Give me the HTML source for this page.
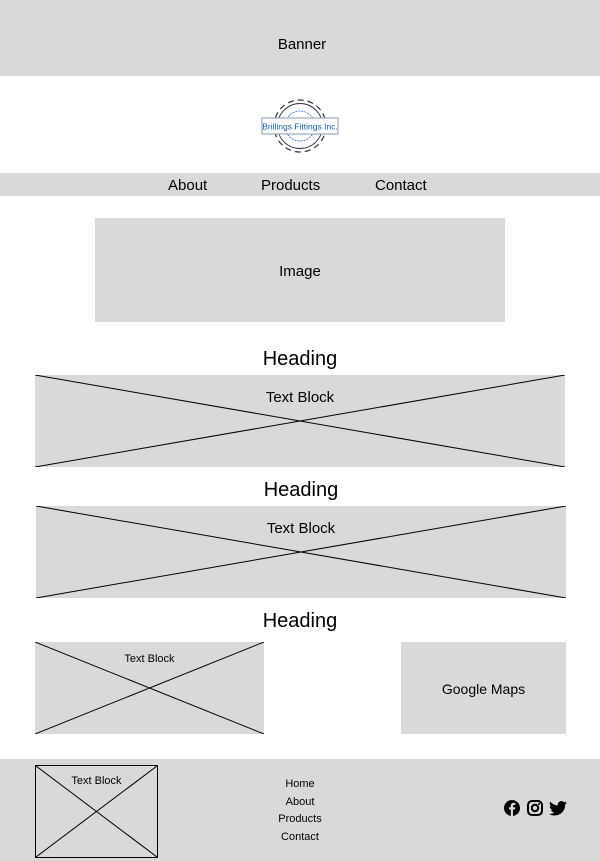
<html><head><style>
body{margin:0;width:600px;height:861px;position:relative;background:#fff;font-family:"Liberation Sans",sans-serif;color:#000;overflow:hidden}
.a{position:absolute}
.g{background:#d9d9d9}
.c{display:flex;align-items:center;justify-content:center}
.t{position:absolute;width:100%;text-align:center}
svg.x{position:absolute;left:0;top:0}
</style></head><body>
<div class="a g c" style="left:0;top:0;width:600px;height:76px;font-size:15px;padding-left:4px;padding-top:12px;box-sizing:border-box">Banner</div>
<svg class="a" style="left:259px;top:96px" width="82" height="60" viewBox="0 0 82 60">
<circle cx="41" cy="30" r="26" fill="none" stroke="#334" stroke-width="1.2" stroke-dasharray="6 4"/>
<circle cx="41" cy="30" r="22.5" fill="none" stroke="#334" stroke-width="0.9"/>
<circle cx="41" cy="30" r="15" fill="none" stroke="#36c" stroke-width="0.8" stroke-dasharray="2 1"/>
<rect x="3" y="22" width="76" height="16" fill="#fff" stroke="#9ab" stroke-width="1.2"/>
<text x="41" y="33.5" font-size="8.5" text-anchor="middle" fill="#1a5ea8" font-family="Liberation Sans">Brillings Fittings Inc.</text>
</svg>
<div class="a g" style="left:0;top:173px;width:600px;height:23px;font-size:15px">
<span class="a" style="left:168px;top:4px">About</span>
<span class="a" style="left:261px;top:4px">Products</span>
<span class="a" style="left:375px;top:4px">Contact</span>
</div>
<div class="a g c" style="left:95px;top:218px;width:410px;height:104px;font-size:15px;padding-top:2px;box-sizing:border-box">Image</div>
<div class="t" style="top:348px;font-size:20px">Heading</div>
<div class="a g" style="left:35px;top:375px;width:530px;height:92px"><svg class="x" width="530" height="92"><line x1="0" y1="0" x2="530" y2="92" stroke="#000"/><line x1="0" y1="92" x2="530" y2="0" stroke="#000"/></svg><div class="t" style="top:14px;font-size:15px">Text Block</div></div>
<div class="t" style="top:479px;font-size:20px;left:1px">Heading</div>
<div class="a g" style="left:36px;top:506px;width:530px;height:92px"><svg class="x" width="530" height="92"><line x1="0" y1="0" x2="530" y2="92" stroke="#000"/><line x1="0" y1="92" x2="530" y2="0" stroke="#000"/></svg><div class="t" style="top:14px;font-size:15px">Text Block</div></div>
<div class="t" style="top:610px;font-size:20px">Heading</div>
<div class="a g" style="left:35px;top:642px;width:229px;height:92px"><svg class="x" width="229" height="92"><line x1="0" y1="0" x2="229" y2="92" stroke="#000"/><line x1="0" y1="92" x2="229" y2="0" stroke="#000"/></svg><div class="t" style="top:11px;font-size:11px">Text Block</div></div>
<div class="a g c" style="left:401px;top:642px;width:165px;height:92px;font-size:14px;padding-top:2px;box-sizing:border-box">Google Maps</div>
<div class="a g" style="left:0;top:759px;width:600px;height:102px">
<div class="a" style="left:35px;top:6px;width:121px;height:91px;border:1px solid #000"><svg class="x" width="121" height="91"><line x1="0" y1="0" x2="121" y2="91" stroke="#000"/><line x1="0" y1="91" x2="121" y2="0" stroke="#000"/></svg><div class="t" style="top:9px;font-size:11px">Text Block</div></div>
<div class="a" style="left:260px;top:17px;width:80px;text-align:center;font-size:11px;line-height:17.7px">Home<br>About<br>Products<br>Contact</div>
<svg class="a" style="left:504px;top:41px" width="16" height="16" viewBox="0 0 16 16"><circle cx="8" cy="8" r="8"/><path d="M9 16V9.5h2l.3-2.3H9V6c0-.6.2-1 1.1-1h1.2V3a15 15 0 00-1.8-.1C7.8 2.9 6.8 4 6.8 5.8v1.4H5v2.3h1.8V16z" fill="#d9d9d9"/></svg>
<svg class="a" style="left:527px;top:41px" width="16" height="16" viewBox="0 0 16 16"><rect x="1" y="1" width="14" height="14" rx="4" fill="none" stroke="#000" stroke-width="2"/><circle cx="8" cy="8" r="3.2" fill="none" stroke="#000" stroke-width="2"/><circle cx="12" cy="4" r="1"/></svg>
<svg class="a" style="left:549px;top:42px" width="18" height="15" viewBox="0 0 24 20"><path d="M24 2.4a9.8 9.8 0 01-2.8.8A4.9 4.9 0 0023.3.5a9.9 9.9 0 01-3.1 1.2A4.9 4.9 0 0011.8 6 14 14 0 011.7.9a4.9 4.9 0 001.5 6.6A4.9 4.9 0 01.9 6.9a4.9 4.9 0 004 4.8 4.9 4.9 0 01-2.2.1 4.9 4.9 0 004.6 3.4A9.9 9.9 0 010 17.2 14 14 0 007.5 19.4c9.1 0 14-7.5 14-14v-.6A10 10 0 0024 2.4z"/></svg>
</div>
</body></html>
